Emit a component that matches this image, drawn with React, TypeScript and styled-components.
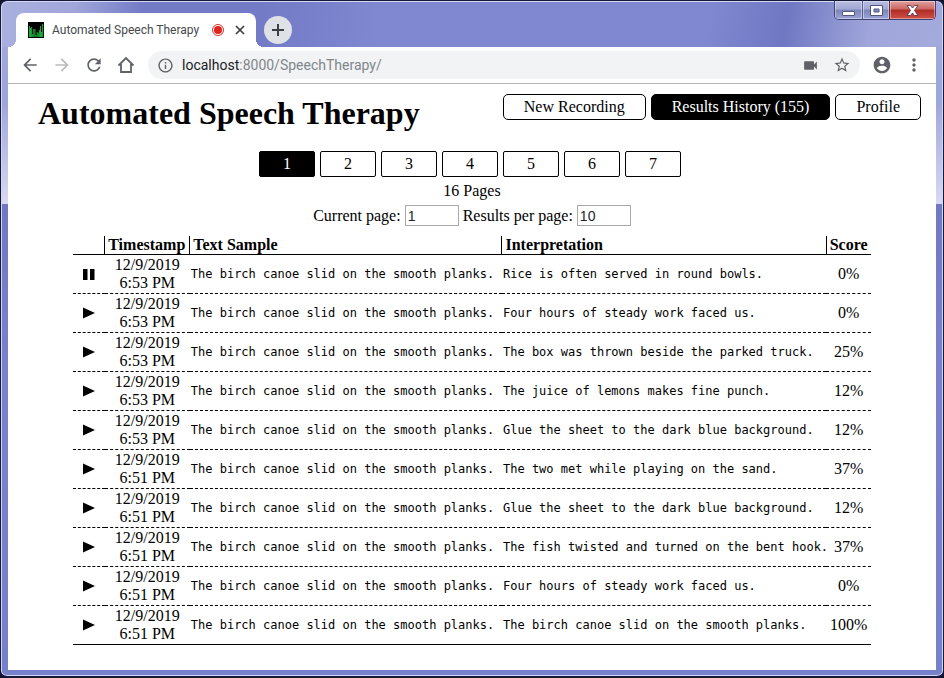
import React, { useState } from 'react';
import styled, { createGlobalStyle } from 'styled-components';

const serif = '"Liberation Serif", "Times New Roman", serif';
const ui = 'Roboto, "Segoe UI", sans-serif';
const mono = '"DejaVu Sans Mono", Consolas, monospace';

const GlobalStyle = createGlobalStyle`
  *, *::before, *::after { box-sizing: border-box; }
  body { margin: 0; background: #10142c; font-family: ${serif}; font-size: 16px; color: #000; }
  button { font: inherit; color: inherit; cursor: pointer; }
`;

const WindowFrame = styled.div`
  min-height: 100vh;
  display: flex;
  flex-direction: column;
  padding: 0 7px 6px;
  border: 1px solid #14183a;
  border-bottom-width: 2px;
  border-radius: 7px;
  box-shadow: inset 0 0 0 1px #d4d8f2;
  background:
    linear-gradient(100deg, #aab0df 0, #a0a6da 8%, rgba(110, 117, 196, 0.9) 15%, rgba(110, 117, 196, 0.9) 28%,
      rgba(124, 132, 208, 0.9) 40%, rgba(124, 132, 208, 0.9) 75%, rgba(106, 114, 192, 0.9) 83%, #a0a6da 92%, #a4aadb) 0 0 / 100% 46px no-repeat,
    linear-gradient(#a4aadc, #9ea5da 100px, #d8d8f2 200px) 0 0 / 100% 203px no-repeat,
    linear-gradient(#646db6, #7b82cd 55%, #7780ca);
`;

const TitleBar = styled.header`
  display: flex;
  align-items: flex-end;
  height: 46px;
  padding-left: 8px;
`;

const Tab = styled.div`
  position: relative;
  display: flex;
  align-items: center;
  gap: 8px;
  width: 240px;
  height: 34px;
  padding: 0 8px 0 12px;
  border-radius: 8px 8px 0 0;
  background: #fff;
  color: #45494d;
  font: 12px/16px ${ui};

  > svg { flex: none; }
  &::before, &::after {
    content: '';
    position: absolute;
    bottom: 0;
    width: 8px;
    height: 8px;
  }
  &::before { left: -8px; background: radial-gradient(circle at 0 0, transparent 8px, #fff 8px); }
  &::after { right: -8px; background: radial-gradient(circle at 100% 0, transparent 8px, #fff 8px); }
`;

const TabTitle = styled.span`
  flex: 1;
  white-space: nowrap;
`;

const IconButton = styled.button<{ $size?: number; $tone?: string }>`
  display: grid;
  place-items: center;
  flex: none;
  width: ${p => p.$size ?? 24}px;
  height: ${p => p.$size ?? 24}px;
  padding: 0;
  border: 0;
  border-radius: 50%;
  background: none;
  color: ${p => p.$tone ?? '#5f6368'};
  svg { display: block; }
`;

const NewTabButton = styled(IconButton)`
  align-self: center;
  margin: 12px 0 0 8px;
  background: #dee1e6;
  color: #3c4043;
`;

const CaptionButtons = styled.div`
  display: flex;
  align-self: flex-start;
  height: 19px;
  margin-left: auto;
  overflow: hidden;
  border: 1px solid #3c4374;
  border-top: 0;
  border-radius: 0 0 5px 5px;
`;

const CaptionButton = styled.button<{ $close?: boolean }>`
  display: grid;
  place-items: center;
  width: ${p => (p.$close ? 46 : 27)}px;
  padding: 0;
  border: 0;
  border-left: 1px solid ${p => (p.$close ? '#5c3048' : '#565f9c')};
  box-shadow: inset 0 0 0 1px rgba(255, 255, 255, 0.4);
  background: ${p =>
    p.$close
      ? 'linear-gradient(#e0a0a0, #cd6660 45%, #b02c26 50%, #cf5148)'
      : 'linear-gradient(#b9bddf, #a3a8d3 45%, #7d84b9 50%, #9ca3d5)'};
  &:first-child { border-left: 0; }
`;

const Toolbar = styled.nav`
  display: flex;
  align-items: center;
  height: 37px;
  padding: 0 10px;
  gap: 8px;
  border-bottom: 1px solid #b4b6b9;
  background: #fff;
`;

const AddressBar = styled.div`
  display: flex;
  flex: 1;
  align-items: center;
  gap: 8px;
  height: 28px;
  margin: 0 2px;
  padding: 0 6px 0 9px;
  border-radius: 14px;
  background: #f1f3f4;
  color: #5f6368;
`;

const Address = styled.div`
  flex: 1;
  color: #80868b;
  font: 14px/20px ${ui};
  span { color: #202124; }
`;

const Page = styled.main`
  flex: 1;
  padding: 10px 15px 25px 30px;
  background: #fff;
`;

const PageHeader = styled.div`
  display: flex;
  justify-content: space-between;
  align-items: flex-start;
`;

const Title = styled.h1`
  margin: 0;
  font-size: 32px;
  line-height: 38px;
`;

const Sections = styled.nav`
  display: flex;
  gap: 5px;
`;

const SectionButton = styled.button<{ $active?: boolean }>`
  height: 26px;
  padding: 0 20px;
  border: 1px solid #000;
  border-radius: 5px;
  background: ${p => (p.$active ? '#000' : '#fff')};
  color: ${p => (p.$active ? '#fff' : '#000')};
  font-size: 16px;
  line-height: 24px;
  white-space: nowrap;
`;

const PageButton = styled(SectionButton)`
  width: 56px;
  padding: 0;
  border-radius: 2px;
`;

const Results = styled.section`
  display: flex;
  flex-direction: column;
  align-items: center;
  margin: 19px 15px 0 0;
`;

const Pager = styled.div`
  display: flex;
  gap: 5px;
  padding-right: 4px;
`;

const PageCount = styled.p`
  margin: 5px 0;
  line-height: 18px;
`;

const Settings = styled.div`
  display: flex;
  gap: 4px;
  label { display: flex; align-items: center; gap: 4px; line-height: 20px; }
`;

const NumberInput = styled.input`
  width: 54px;
  height: 21px;
  padding: 0 2px;
  border: 1px solid #a9a9a9;
  background: #fff;
  color: #223;
  font: 14px "Liberation Sans", Arial, sans-serif;
`;

const ResultTable = styled.table`
  width: 92%;
  margin-top: 10px;
  table-layout: fixed;
  border-collapse: collapse;
  line-height: 18px;

  th {
    padding: 0 3px;
    border-left: 1px solid #000;
    border-bottom: 1px solid #000;
    text-align: left;
  }
  th:first-child { border-left: 0; }
  td {
    height: 39px;
    padding: 1px;
    border-bottom: 1px dashed #000;
    text-align: center;
  }
  tbody tr:last-child td { border-bottom-style: solid; }
`;

const Col = styled.col<{ $w: number }>`
  width: ${p => p.$w}px;
`;

const Sentence = styled.td`
  && { text-align: left; }
  font-family: ${mono};
  font-size: 12px;
  white-space: nowrap;
`;

const PlayButton = styled(IconButton)`
  margin: 0 auto;
`;

const sample = 'The birch canoe slid on the smooth planks.';
const rows: [string, string, string][] = [
  ['6:53 PM', 'Rice is often served in round bowls.', '0%'],
  ['6:53 PM', 'Four hours of steady work faced us.', '0%'],
  ['6:53 PM', 'The box was thrown beside the parked truck.', '25%'],
  ['6:53 PM', 'The juice of lemons makes fine punch.', '12%'],
  ['6:53 PM', 'Glue the sheet to the dark blue background.', '12%'],
  ['6:51 PM', 'The two met while playing on the sand.', '37%'],
  ['6:51 PM', 'Glue the sheet to the dark blue background.', '12%'],
  ['6:51 PM', 'The fish twisted and turned on the bent hook.', '37%'],
  ['6:51 PM', 'Four hours of steady work faced us.', '0%'],
  ['6:51 PM', sample, '100%'],
];

const materialPaths = {
  back: 'M20 11H7.83l5.59-5.59L12 4l-8 8 8 8 1.41-1.41L7.83 13H20v-2z',
  forward: 'M12 4l-1.41 1.41L16.17 11H4v2h12.17l-5.58 5.59L12 20l8-8z',
  reload:
    'M17.65 6.35C16.2 4.9 14.21 4 12 4c-4.42 0-7.99 3.58-7.99 8s3.57 8 7.99 8c3.73 0 6.84-2.55 7.73-6h-2.08c-.82 2.33-3.04 4-5.65 4-3.31 0-6-2.69-6-6s2.69-6 6-6c1.66 0 3.14.69 4.22 1.78L13 11h7V4l-2.35 2.35z',
  info: 'M11 7h2v2h-2zm0 4h2v6h-2zm1-9C6.48 2 2 6.48 2 12s4.48 10 10 10 10-4.48 10-10S17.52 2 12 2zm0 18c-4.41 0-8-3.59-8-8s3.59-8 8-8 8 3.59 8 8-3.59 8-8 8z',
  camera: 'M17 10.5V7c0-.55-.45-1-1-1H4c-.55 0-1 .45-1 1v10c0 .55.45 1 1 1h12c.55 0 1-.45 1-1v-3.500l4 4v-11l-4 4z',
  star: 'M22 9.24l-7.19-.62L12 2 9.190 8.630 2 9.240l5.460 4.730L5.820 21 12 17.270 18.180 21l-1.630-7.030L22 9.240zM12 15.400l-3.760 2.270 1-4.280-3.320-2.880 4.380-.38L12 6.100l1.710 4.040 4.380.38-3.320 2.880 1 4.280L12 15.400z',
  account:
    'M12 2C6.480 2 2 6.480 2 12s4.480 10 10 10 10-4.480 10-10S17.520 2 12 2zm0 3c1.660 0 3 1.340 3 3s-1.340 3-3 3-3-1.340-3-3 1.340-3 3-3zm0 14.200c-2.500 0-4.710-1.280-6-3.220.03-1.990 4-3.080 6-3.080 1.990 0 5.970 1.090 6 3.080-1.290 1.940-3.500 3.220-6 3.220z',
  more: 'M12 8c1.100 0 2-.9 2-2s-.9-2-2-2-2 .9-2 2 .9 2 2 2zm0 2c-1.100 0-2 .9-2 2s.9 2 2 2 2-.9 2-2-.9-2-2-2zm0 6c-1.100 0-2 .9-2 2s.9 2 2 2 2-.9 2-2-.9-2-2-2z',
};

function Glyph({ name, size = 20 }: { name: keyof typeof materialPaths; size?: number }) {
  return (
    <svg width={size} height={size} viewBox="0 0 24 24" fill="currentColor" aria-hidden="true">
      <path d={materialPaths[name]} />
    </svg>
  );
}

function Favicon() {
  const bars = [11, 9, 10, 3, 8, 8, 2, 5, 4, 7, 11, 5, 13];
  return (
    <svg width="16" height="16" viewBox="0 0 16 16" aria-hidden="true">
      <rect width="16" height="16" fill="#000" />
      {bars.map((h, i) => (
        <rect key={i} x={1 + i * 1.1} y={15 - h} width="0.9" height={h} fill="#1ec040" />
      ))}
    </svg>
  );
}

export default function App() {
  const [page, setPage] = useState(1);
  const [perPage, setPerPage] = useState('10');
  const [playing, setPlaying] = useState(0);

  return (
    <>
      <GlobalStyle />
      <WindowFrame>
        <TitleBar>
          <Tab>
            <Favicon />
            <TabTitle>Automated Speech Therapy</TabTitle>
            <svg width="12" height="12" viewBox="0 0 12 12" aria-hidden="true">
              <circle cx="6" cy="6" r="5.500" fill="none" stroke="#e0322b" />
              <circle cx="6" cy="6" r="4" fill="#e0251f" />
            </svg>
            <IconButton $size={16} $tone="#3c4043" aria-label="Close tab">
              <svg width="10" height="10" viewBox="0 0 10 10" stroke="currentColor" strokeWidth="1.700">
                <path d="M1 1l8 8M9 1l-8 8" />
              </svg>
            </IconButton>
          </Tab>
          <NewTabButton $size={28} aria-label="New tab">
            <svg width="12" height="12" viewBox="0 0 12 12" stroke="currentColor" strokeWidth="2">
              <path d="M6 0v12M0 6h12" />
            </svg>
          </NewTabButton>
          <CaptionButtons>
            <CaptionButton aria-label="Minimize">
              <svg width="13" height="11" viewBox="0 0 13 11">
                <rect x="0.500" y="6.500" width="12" height="4" rx="0.500" fill="#fff" stroke="#50567c" />
              </svg>
            </CaptionButton>
            <CaptionButton aria-label="Maximize">
              <svg width="13" height="11" viewBox="0 0 13 11">
                <path fillRule="evenodd" d="M0.500 0.500h12v10h-12zM4 4h5v3H4z" fill="#fff" stroke="#50567c" />
              </svg>
            </CaptionButton>
            <CaptionButton $close aria-label="Close">
              <svg width="13" height="11" viewBox="0 0 13 11">
                <path
                  d="M1 .5h3.500l2 2.500 2-2.500H12L8.500 5.500l3.500 5H8.500l-2-2.500-2 2.500H1l3.500-5z"
                  fill="#fff"
                  stroke="#6a4050"
                />
              </svg>
            </CaptionButton>
          </CaptionButtons>
        </TitleBar>

        <Toolbar aria-label="Browser">
          <IconButton aria-label="Back"><Glyph name="back" /></IconButton>
          <IconButton $tone="#babcbe" aria-label="Forward"><Glyph name="forward" /></IconButton>
          <IconButton aria-label="Reload"><Glyph name="reload" /></IconButton>
          <IconButton aria-label="Home">
            <svg width="18" height="18" viewBox="0 0 18 18" fill="none" stroke="currentColor" strokeWidth="1.800">
              <path d="M1.500 9.500L9 2l7.500 7.500M4 8v8h10V8" />
            </svg>
          </IconButton>
          <AddressBar>
            <Glyph name="info" size={17} />
            <Address><span>localhost</span>:8000/SpeechTherapy/</Address>
            <IconButton aria-label="Camera"><Glyph name="camera" size={17} /></IconButton>
            <IconButton aria-label="Bookmark"><Glyph name="star" size={18} /></IconButton>
          </AddressBar>
          <IconButton aria-label="Account"><Glyph name="account" /></IconButton>
          <IconButton aria-label="Menu"><Glyph name="more" size={20} /></IconButton>
        </Toolbar>

        <Page>
          <PageHeader>
            <Title>Automated Speech Therapy</Title>
            <Sections>
              <SectionButton>New Recording</SectionButton>
              <SectionButton $active>Results History (155)</SectionButton>
              <SectionButton>Profile</SectionButton>
            </Sections>
          </PageHeader>

          <Results>
            <Pager>
              {[1, 2, 3, 4, 5, 6, 7].map(n => (
                <PageButton key={n} $active={n === page} onClick={() => setPage(n)}>{n}</PageButton>
              ))}
            </Pager>
            <PageCount>16 Pages</PageCount>
            <Settings>
              <label>
                Current page:
                <NumberInput inputMode="numeric" value={page} onChange={e => setPage(Number(e.target.value) || 1)} />
              </label>
              <label>
                Results per page:
                <NumberInput inputMode="numeric" value={perPage} onChange={e => setPerPage(e.target.value)} />
              </label>
            </Settings>
            <ResultTable>
              <colgroup>
                <Col $w={32} />
                <Col $w={85} />
                <Col $w={312} />
                <Col $w={324} />
                <Col $w={45} />
              </colgroup>
              <thead>
                <tr>
                  <th aria-label="Playback" />
                  <th>Timestamp</th>
                  <th>Text Sample</th>
                  <th>Interpretation</th>
                  <th>Score</th>
                </tr>
              </thead>
              <tbody>
                {rows.map(([time, heard, score], i) => (
                  <tr key={i}>
                    <td>
                      <PlayButton
                        $tone="#000"
                        aria-label={i === playing ? 'Pause' : 'Play'}
                        onClick={() => setPlaying(i === playing ? -1 : i)}
                      >
                        <svg width="12" height="12" viewBox="0 0 12 12" fill="currentColor">
                          <path d={i === playing ? 'M0 1h4.500v11H0zM7 1h4.500v11H7z' : 'M0 0.500L12 6L0 11.500z'} />
                        </svg>
                      </PlayButton>
                    </td>
                    <td>12/9/2019<br />{time}</td>
                    <Sentence>{sample}</Sentence>
                    <Sentence>{heard}</Sentence>
                    <td>{score}</td>
                  </tr>
                ))}
              </tbody>
            </ResultTable>
          </Results>
        </Page>
      </WindowFrame>
    </>
  );
}
